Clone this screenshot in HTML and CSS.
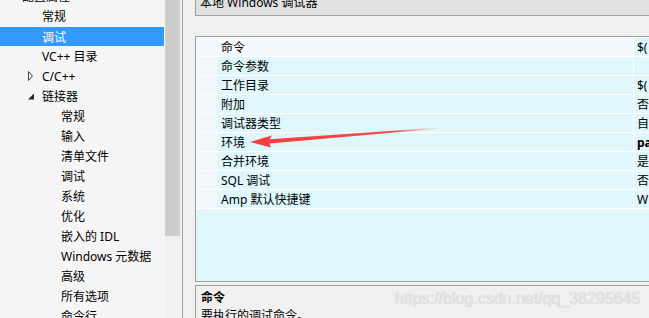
FILE: index.html
```html
<!DOCTYPE html>
<html lang="zh-CN">
<head>
    <meta charset="UTF-8">
    <title>调试 属性页</title>
    <link rel="stylesheet" href="styles.css">
</head>
<body>
    <div class="tree">
        <ul class="tree-list">
            <li class="node lvl0">配置属性</li>
            <li class="node lvl1">常规</li>
            <li class="node lvl1 selected">调试</li>
            <li class="node lvl1">VC++ 目录</li>
            <li class="node lvl1">
                <svg class="twisty" width="14" height="20" viewBox="0 0 14 20"><path d="M0.5 5.5 L4.5 10 L0.5 14.5 Z" fill="none" stroke="#404040" stroke-width="1"/></svg>C/C++
            </li>
            <li class="node lvl1">
                <svg class="twisty" width="14" height="20" viewBox="0 0 14 20"><path d="M0 13.5 L6 13.5 L6 7.5 Z" fill="#262626"/></svg>链接器
            </li>
            <li class="node lvl2">常规</li>
            <li class="node lvl2">输入</li>
            <li class="node lvl2">清单文件</li>
            <li class="node lvl2">调试</li>
            <li class="node lvl2">系统</li>
            <li class="node lvl2">优化</li>
            <li class="node lvl2">嵌入的 IDL</li>
            <li class="node lvl2">Windows 元数据</li>
            <li class="node lvl2">高级</li>
            <li class="node lvl2">所有选项</li>
            <li class="node lvl2">命令行</li>
        </ul>
    </div>

    <div class="vscroll">
        <div class="thumb"></div>
    </div>
    <div class="splitter"></div>

    <div class="main">
        <div class="target">本地 Windows 调试器</div>

        <div class="grid">
            <div class="row current">
                <div class="margin"></div>
                <div class="name">命令</div>
                <div class="value">$(</div>
            </div>
            <div class="row">
                <div class="margin"></div>
                <div class="name">命令参数</div>
                <div class="value"></div>
            </div>
            <div class="row">
                <div class="margin"></div>
                <div class="name">工作目录</div>
                <div class="value">$(</div>
            </div>
            <div class="row">
                <div class="margin"></div>
                <div class="name">附加</div>
                <div class="value">否</div>
            </div>
            <div class="row">
                <div class="margin"></div>
                <div class="name">调试器类型</div>
                <div class="value">自</div>
            </div>
            <div class="row">
                <div class="margin"></div>
                <div class="name">环境</div>
                <div class="value bold">pa</div>
            </div>
            <div class="row">
                <div class="margin"></div>
                <div class="name">合并环境</div>
                <div class="value">是</div>
            </div>
            <div class="row">
                <div class="margin"></div>
                <div class="name">SQL 调试</div>
                <div class="value">否</div>
            </div>
            <div class="row last">
                <div class="margin"></div>
                <div class="name">Amp 默认快捷键</div>
                <div class="value">W</div>
            </div>
        </div>

        <div class="desc">
            <div class="desc-title">命令</div>
            <div class="desc-text">要执行的调试命令。</div>
        </div>
    </div>

    <div class="watermark">https://blog.csdn.net/qq_38295645</div>

    <!-- red pointer drawn over the grid -->
    <svg class="pointer" width="649" height="318" viewBox="0 0 649 318">
        <defs>
            <linearGradient id="fade" x1="250" y1="0" x2="440" y2="0" gradientUnits="userSpaceOnUse">
                <stop offset="0" stop-color="#f23c3c"/>
                <stop offset="0.75" stop-color="#f23c3c" stop-opacity="0.9"/>
                <stop offset="1" stop-color="#f23c3c" stop-opacity="0"/>
            </linearGradient>
        </defs>
        <path d="M250 142 L272 135.5 L269.5 139.2 L440 127.6 L440 128.4 L269.5 143.6 L271 147.5 Z" fill="url(#fade)"/>
    </svg>
</body>
</html>
```

FILE: styles.css
```css
* {
    margin: 0;
    padding: 0;
    box-sizing: border-box;
}

body {
    width: 649px;
    height: 318px;
    overflow: hidden;
    display: flex;
    position: relative;
    background: #f0f0f0;
    color: #000;
    font-family: "Noto Sans", "Noto Sans CJK SC", sans-serif;
    font-size: 12px;
}

/* left tree */
.tree {
    width: 165px;
    flex-shrink: 0;
    background: #f5f5f5;
    overflow: hidden;
}

.tree-list {
    list-style: none;
    margin-top: -14px;
}

.node {
    height: 20px;
    line-height: 20px;
    padding-top: 2px;
    white-space: nowrap;
    display: flex;
    align-items: center;
}

.lvl0 { padding-left: 22px; }
.lvl1 { padding-left: 42px; }
.lvl2 { padding-left: 61px; }

.node.selected {
    background: #3399ff;
    color: #fff;
    margin-top: 1px;
    height: 19px;
    margin-right: 1px;
}

.twisty {
    margin-left: -14px;
    margin-top: -2px;
    flex-shrink: 0;
}

.vscroll {
    width: 15px;
    flex-shrink: 0;
    background: #f0f0f0;
}

.thumb {
    height: 236px;
    background: #cdcdcd;
}

.splitter {
    width: 1px;
    margin-left: 2px;
    flex-shrink: 0;
    background: #9ea3ab;
}

/* right side */
.main {
    flex: 1;
    padding-left: 12px;
    display: flex;
    flex-direction: column;
    min-width: 0;
}

.target {
    flex-shrink: 0;
    margin-top: -8px;
    height: 24px;
    line-height: 22px;
    padding-left: 4px;
    background: #e1e1e1;
    border-left: 1px solid #a0a0a0;
    border-bottom: 1px solid #a0a0a0;
    white-space: nowrap;
}

.grid {
    flex-shrink: 0;
    margin-top: 20px;
    height: 246px;
    background: #dff7fb;
    border-top: 1px solid #a0a0a0;
    border-left: 1px solid #a0a0a0;
    border-bottom: 1px solid #a0a0a0;
}

.row {
    display: flex;
    height: 19px;
    border-top: 1px solid #fff;
    line-height: 20px;
    white-space: nowrap;
}

.row.last {
    height: 20px;
    border-bottom: 1px solid #fff;
}

.margin {
    width: 21px;
    flex-shrink: 0;
    background: #f4f7fc;
}

.name {
    width: 417px;
    height: 18px;
    flex-shrink: 0;
    padding-left: 4px;
    border-right: 1px solid #fff;
}

.row.current .name {
    background: #f4f7fc;
}

.value {
    flex: 1;
    height: 18px;
    padding-left: 3px;
    overflow: hidden;
}

.value.bold {
    font-weight: bold;
}

.desc {
    margin-top: 3px;
    flex: 1;
    min-height: 0;
    overflow: hidden;
    border-top: 1px solid #a0a0a0;
    border-left: 1px solid #a0a0a0;
    padding: 3px 0 0 5px;
    line-height: 18px;
    white-space: nowrap;
}

.desc-title {
    font-weight: bold;
}

.watermark {
    position: absolute;
    left: 395px;
    top: 290px;
    font-family: "Liberation Sans", sans-serif;
    font-size: 16px;
    color: #e4e4e4;
    text-shadow: 0 0 1px #c4c4c4;
    white-space: nowrap;
}

.pointer {
    position: absolute;
    left: 0;
    top: 0;
    pointer-events: none;
}
```
